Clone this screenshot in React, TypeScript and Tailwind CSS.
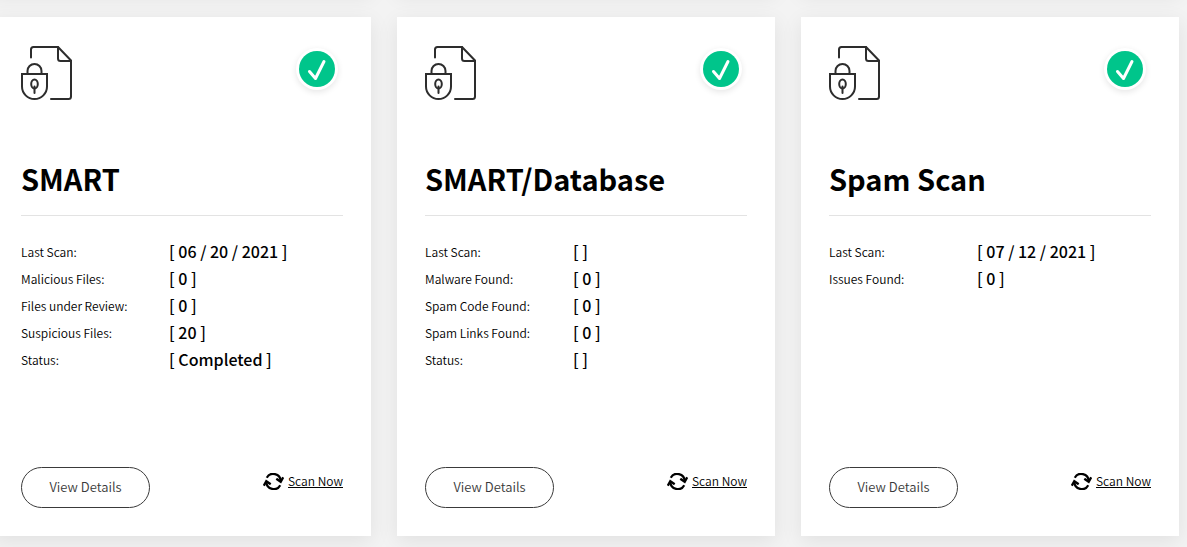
const CARDS = [
  {
    title: 'SMART',
    rows: [
      ['Last Scan:', '[ 06 / 20 / 2021 ]'],
      ['Malicious Files:', '[ 0 ]'],
      ['Files under Review:', '[ 0 ]'],
      ['Suspicious Files:', '[ 20 ]'],
      ['Status:', '[ Completed ]'],
    ],
  },
  {
    title: 'SMART/Database',
    rows: [
      ['Last Scan:', '[ ]'],
      ['Malware Found:', '[ 0 ]'],
      ['Spam Code Found:', '[ 0 ]'],
      ['Spam Links Found:', '[ 0 ]'],
      ['Status:', '[ ]'],
    ],
  },
  {
    title: 'Spam Scan',
    rows: [
      ['Last Scan:', '[ 07 / 12 / 2021 ]'],
      ['Issues Found:', '[ 0 ]'],
    ],
  },
]

function LockedFileIcon() {
  return (
    <svg width="52" height="55" viewBox="0 0 52 55" fill="none" stroke="#2d2d2d" strokeWidth="2" strokeLinecap="round" strokeLinejoin="round">
      <path d="M10 11.500V3.500Q10 1 12.500 1H37L50 14.500V50.500Q50 53 47.500 53H30" />
      <path d="M37 1V12.500Q37 15 39.500 15H50" />
      <path d="M1 28H26V40.500A12.500 12.500 0 0 1 1 40.500Z" strokeLinejoin="miter" />
      <path d="M6.500 28V25A7 7 0 0 1 20.500 25V28" />
      <ellipse cx="13.500" cy="38" rx="3.300" ry="4.500" />
      <path d="M13.500 40.500V47" />
    </svg>
  )
}

function CheckBadge() {
  return (
    <div className="flex size-[42px] items-center justify-center rounded-full bg-white shadow-[0_2px_6px_rgba(0,0,0,0.1)]">
      <svg width="36" height="36" viewBox="0 0 36 36" fill="none">
        <circle cx="18" cy="18" r="18" fill="#00c58b" />
        <path d="M10.500 20.500L16.500 27.500L25 10.500" stroke="#fff" strokeWidth="3" strokeLinecap="round" strokeLinejoin="round" />
      </svg>
    </div>
  )
}

function SyncIcon() {
  return (
    <svg width="21" height="17" viewBox="0 0 21 17" fill="none" stroke="#000" strokeWidth="2.300">
      <path d="M3.800 4.800A7.400 7.400 0 0 1 17.700 8" />
      <path d="M17.200 12.200A7.400 7.400 0 0 1 3.300 9" />
      <path d="M13.300 5.800L17.700 8.800L20.200 4.200" />
      <path d="M7.700 11.200L3.300 8.200L0.800 12.800" />
    </svg>
  )
}

export default function App() {
  return (
    <main className="min-h-screen overflow-hidden bg-[#f3f3f3] font-['Noto_Sans_CJK_SC',sans-serif] text-black">
      <div className="-mt-10 mr-2 -ml-[7px] grid grid-cols-3 gap-[26px] pb-3">
        {/* lower edge of the previous row */}
        {CARDS.map((card) => (
          <div key={card.title} className="h-[31px] bg-white shadow-[0_5px_20px_rgba(0,0,0,0.08)]" />
        ))}
        {CARDS.map((card) => (
          <section key={card.title} className="flex min-h-[519px] flex-col bg-white px-7 pt-[29px] pb-7 shadow-[0_5px_20px_rgba(0,0,0,0.08)]">
            <div className="flex items-start justify-between">
              <LockedFileIcon />
              <div className="pt-0.5 pr-[5px]">
                <CheckBadge />
              </div>
            </div>
            <h2 className="mt-[57px] border-b border-[#e3e3e3] pb-[17px] text-[29px] leading-10 font-bold">{card.title}</h2>
            <dl className="mt-[22px] grid grid-cols-[148px_1fr] items-center">
              {card.rows.map(([label, value]) => (
                <div key={label} className="col-span-2 grid h-[27px] grid-cols-subgrid items-center">
                  <dt className="text-[12px] font-[350]">{label}</dt>
                  <dd className="pb-0.5 text-[16px] font-medium">{value}</dd>
                </div>
              ))}
            </dl>
            <div className="mt-auto flex items-start justify-between">
              <button className="h-[41px] w-[129px] rounded-full border border-[#3a3a3a] pb-0.5 text-[13px] font-[350] text-[#3a3a3a]">View Details</button>
              <a href="#" className="mt-[5px] flex items-center gap-1 text-[12px] font-[350]">
                <SyncIcon />
                <span className="underline">Scan Now</span>
              </a>
            </div>
          </section>
        ))}
      </div>
    </main>
  )
}
